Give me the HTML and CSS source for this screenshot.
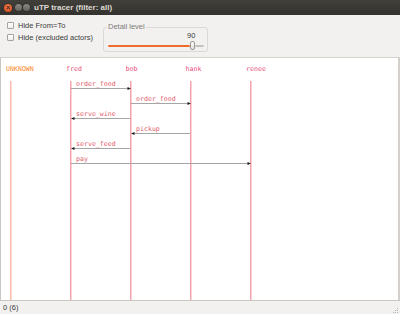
FILE: index.html
```html
<!DOCTYPE html>
<html lang="en">

<head>
  <meta charset="UTF-8" />
  <title>uTP tracer (filter: all)</title>
  <link rel="stylesheet" href="styles.css">
</head>

<body>
  <div class="window">
    <div class="titlebar">
      <span class="btn close">×</span>
      <span class="btn"></span>
      <span class="btn"></span>
      <span class="title">uTP tracer (filter: all)</span>
    </div>

    <div class="toolbar">
      <div class="options">
        <label class="check"><span class="box"></span>Hide From=To</label>
        <label class="check"><span class="box"></span>Hide (excluded actors)</label>
      </div>
      <fieldset class="group">
        <legend>Detail level</legend>
        <div class="value">90</div>
        <div class="scale">
          <span class="fill"></span>
          <span class="handle"></span>
          <span class="rest"></span>
        </div>
      </fieldset>
    </div>

    <div class="canvas">
      <svg class="diagram" width="397" height="242" viewBox="1 59 397 242">
        <g class="names">
          <text x="6" y="71.5" class="unknown">UNKNOWN</text>
          <text x="66" y="71.5">fred</text>
          <text x="125.5" y="71.5">bob</text>
          <text x="185.5" y="71.5">hank</text>
          <text x="246" y="71.5">renee</text>
        </g>
        <g class="lifelines">
          <line x1="10.75" y1="82" x2="10.75" y2="301" class="unknown" />
          <line x1="70.75" y1="82" x2="70.75" y2="301" />
          <line x1="130.75" y1="82" x2="130.75" y2="301" />
          <line x1="190.75" y1="82" x2="190.75" y2="301" />
          <line x1="250.75" y1="82" x2="250.75" y2="301" />
        </g>
        <g class="msgs">
          <text x="76" y="86.5">order_food</text>
          <line x1="71" y1="89.5" x2="130" y2="89.5" />
          <polygon points="131,89.5 127.5,88 127.5,91" />

          <text x="136" y="101.5">order_food</text>
          <line x1="131" y1="104.5" x2="190" y2="104.5" />
          <polygon points="191,104.5 187.5,103 187.5,106" />

          <text x="76" y="116.5">serve_wine</text>
          <line x1="72" y1="119.5" x2="130" y2="119.5" />
          <polygon points="71,119.5 74.5,118 74.5,121" />

          <text x="136" y="131.5">pickup</text>
          <line x1="132" y1="134.5" x2="190" y2="134.5" />
          <polygon points="131,134.5 134.5,133 134.5,136" />

          <text x="76" y="146.5">serve_feed</text>
          <line x1="72" y1="149.5" x2="130" y2="149.5" />
          <polygon points="71,149.5 74.5,148 74.5,151" />

          <text x="76" y="161.5">pay</text>
          <line x1="71" y1="164.5" x2="250" y2="164.5" />
          <polygon points="251,164.5 247.5,163 247.5,166" />
        </g>
      </svg>
    </div>

    <div class="statusbar">
      <span>0 (6)</span>
      <svg class="grip" width="8" height="8" viewBox="0 0 8 8">
        <rect x="6" y="2" width="1" height="1" />
        <rect x="4" y="4" width="1" height="1" />
        <rect x="6" y="4" width="1" height="1" />
        <rect x="2" y="6" width="1" height="1" />
        <rect x="4" y="6" width="1" height="1" />
        <rect x="6" y="6" width="1" height="1" />
      </svg>
    </div>
  </div>
</body>

</html>
```

FILE: styles.css
```css
body {
  margin: 0;
  background-color: #f2f1f0;
  font-family: "Liberation Sans", Arial, sans-serif;
}

.window {
  width: 400px;
  height: 314px;
  display: flex;
  flex-direction: column;
}

.titlebar {
  height: 15px;
  display: flex;
  align-items: center;
  padding-left: 4px;
  background: linear-gradient(#403f3a, #33322e);
}

.titlebar .btn {
  width: 7px;
  height: 7px;
  margin-right: 1px;
  border-radius: 50%;
  background: linear-gradient(#8a8982, #63625c);
  box-shadow: 0 0 0 0.5px #2a2926;
}

.titlebar .btn.close {
  width: 8px;
  height: 8px;
  margin-right: 3px;
  background: radial-gradient(circle at 50% 35%, #f47a4d, #d8461b);
  color: #3a2a22;
  font-size: 7px;
  line-height: 8px;
  text-align: center;
  font-weight: bold;
}

.titlebar .title {
  margin-left: 3px;
  font-size: 8px;
  font-weight: bold;
  color: #dfdbd2;
}

.toolbar {
  height: 43px;
  box-sizing: border-box;
  display: flex;
  padding: 4px 0 0 7px;
  border-bottom: 1px solid #d6d2cd;
}

.options {
  width: 96px;
  font-size: 7.5px;
  color: #3c3c3c;
}

.check {
  height: 12px;
  display: flex;
  align-items: center;
}

.check .box {
  width: 5px;
  height: 5px;
  margin-right: 4px;
  border: 1px solid #a7a49f;
  border-radius: 1px;
  background: linear-gradient(#ffffff, #eeedeb);
}

.group {
  width: 104px;
  height: 29px;
  box-sizing: border-box;
  margin: 4px 0 0;
  padding: 0 3px 0 4px;
  border: 1px solid #dcd8d3;
  border-radius: 3px;
}

.group legend {
  margin-left: -1px;
  padding: 0 1px;
  font-size: 7.5px;
  line-height: 8px;
  color: #7d7b78;
}

.group .value {
  padding-left: 79px;
  font-size: 7.5px;
  line-height: 9px;
  color: #3c3c3c;
}

.scale {
  height: 11px;
  display: flex;
  align-items: center;
}

.scale .fill {
  width: 82px;
  height: 2px;
  background-color: #ef6c2f;
  border-radius: 1px;
}

.scale .handle {
  width: 5px;
  height: 9px;
  box-sizing: border-box;
  border: 1px solid #9c9995;
  border-radius: 2px;
  background: linear-gradient(#fbfbfa, #e4e2df);
}

.scale .rest {
  width: 9px;
  height: 2px;
  background-color: #c5c2be;
  border-radius: 1px;
}

.canvas {
  height: 242px;
  background-color: #fff;
  border-left: 1px solid #c9c6c1;
  border-right: 2px solid #d3d0cb;
}

.diagram {
  display: block;
  font-family: "DejaVu Sans Mono", monospace;
  font-size: 6.6px;
}

.names text {
  fill: #e8507c;
}

.names text.unknown {
  fill: #ff8a2c;
}

.lifelines line {
  stroke: #f4a3ad;
  stroke-width: 1.5;
}

.lifelines line.unknown {
  stroke: #ffbba9;
}

.msgs text {
  fill: #df5c6c;
}

.msgs line {
  stroke: #a6a6a6;
  stroke-width: 1;
}

.msgs polygon {
  fill: #1e1e1e;
}

.statusbar {
  flex: 1;
  display: flex;
  align-items: center;
  justify-content: space-between;
  padding: 0 1px 0 3px;
  border-top: 1px solid #cbc8c3;
  font-size: 7.5px;
  color: #3c3c3c;
}

.grip {
  align-self: flex-end;
  fill: #b9b6b1;
}
```
